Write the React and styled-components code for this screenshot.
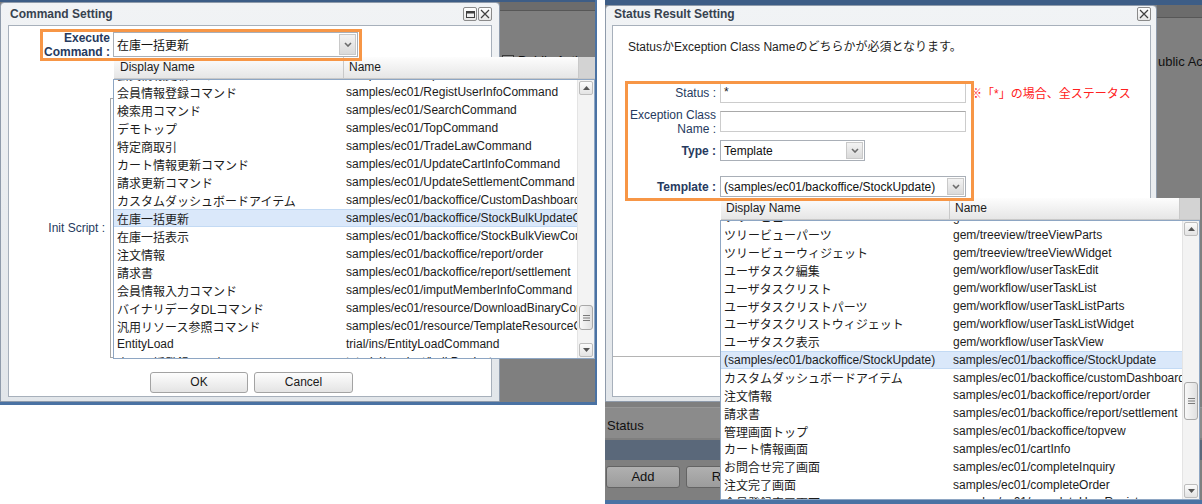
import React from "react";
import styled, { createGlobalStyle } from "styled-components";

const GlobalStyle = createGlobalStyle`
  html, body {
    margin: 0;
    padding: 0;
    background: #ffffff;
  }
  body {
    font-family: "Liberation Sans", Arial, "Noto Sans CJK JP", sans-serif;
    font-size: 12px;
    color: #1c1c1c;
  }
`;

const Page = styled("div")`
  display: flex;
  align-items: flex-start;
  gap: 8px;
  width: 1202px;
  height: 504px;
  overflow: hidden;
`;

const Shot = styled("div")`
  position: relative;
  display: flex;
  flex-direction: column;
  flex-shrink: 0;
  box-sizing: border-box;
  width: 597px;
  height: ${(p) => p.$height}px;
  background: #7f7f7f;
  border-right: ${(p) => p.$edgeRight}px solid #4a72a3;
  border-bottom: ${(p) => p.$edgeBottom}px solid #4a72a3;
`;

const TopStrip = styled("div")`
  flex-shrink: 0;
  height: ${(p) => p.$h}px;
  background: #3d5d86;
`;

const MainRow = styled("div")`
  display: flex;
  flex-shrink: 0;
  height: ${(p) => p.$h}px;
`;

const Dialog = styled("div")`
  position: relative;
  z-index: 1;
  display: flex;
  flex-direction: column;
  flex-shrink: 0;
  box-sizing: border-box;
  width: ${(p) => p.$w}px;
  height: 100%;
  padding: 0 ${(p) => p.$padR}px 4px ${(p) => p.$padL}px;
  background: linear-gradient(#f1f3f5, #e2e6ea);
  border: 1px solid #8f9bab;
  border-radius: 4px 4px 0 0;
`;

const TitleBar = styled("div")`
  display: flex;
  align-items: center;
  flex-shrink: 0;
  box-sizing: border-box;
  height: ${(p) => p.$h}px;
  padding-bottom: ${(p) => p.$lift || 0}px;
  font-weight: bold;
  font-size: 12px;
  color: #37424f;
`;

const TitleText = styled("span")`
  flex: 1;
  padding-left: 2px;
`;

const TitleButtons = styled("div")`
  display: flex;
  gap: 1px;
`;

const TitleButton = styled("div")`
  display: grid;
  place-items: center;
  box-sizing: border-box;
  width: 14px;
  height: 14px;
  border: 1px solid #8a8a8a;
  border-radius: 2px;
  background: linear-gradient(#ffffff, #e6e6e6);
`;

const DialogBody = styled("div")`
  display: flex;
  flex-direction: column;
  flex: 1;
  min-height: 0;
  background: #ffffff;
  border: 1px solid #a7b0bb;
`;

const FieldRow = styled("div")`
  display: flex;
  align-items: center;
  flex-shrink: 0;
  margin-top: ${(p) => p.$top}px;
  height: ${(p) => p.$h}px;
`;

const FieldLabel = styled("div")`
  flex-shrink: 0;
  box-sizing: border-box;
  width: ${(p) => p.$w}px;
  padding-right: ${(p) => p.$pad}px;
  text-align: right;
  line-height: ${(p) => p.$lh || 14}px;
  font-weight: ${(p) => (p.$bold ? "bold" : "normal")};
  color: #263a5e;
`;

const SelectWrap = styled("div")`
  position: relative;
  flex-shrink: 0;
`;

const SelectBox = styled("div")`
  display: flex;
  box-sizing: border-box;
  width: ${(p) => p.$w}px;
  height: ${(p) => p.$h}px;
  border: 1px solid #a9afb7;
  background: #ffffff;
`;

const SelectValue = styled("div")`
  flex: 1;
  display: flex;
  align-items: center;
  padding-left: 3px;
  white-space: nowrap;
  overflow: hidden;
  color: #111111;
`;

const SelectArrow = styled("div")`
  display: grid;
  place-items: center;
  box-sizing: border-box;
  width: 17px;
  margin: 1px;
  border: 1px solid #c9c9c9;
  background: linear-gradient(#f3f3f3, #dadada);
`;

const InputBox = styled("div")`
  box-sizing: border-box;
  width: ${(p) => p.$w}px;
  height: 21px;
  padding-left: 3px;
  line-height: 19px;
  border: 1px solid #cccccc;
  border-top-color: #a9a9a9;
  background: #ffffff;
`;

const Note = styled("div")`
  margin-left: 4px;
  white-space: nowrap;
  color: #ff2020;
`;

const ScriptBox = styled("div")`
  align-self: stretch;
  width: 372px;
  border: 1px solid #a6a6a6;
  background: #ffffff;
`;

const ButtonBar = styled("div")`
  display: flex;
  justify-content: center;
  gap: 6px;
  margin-top: 14px;
  padding-left: 3px;
`;

const PushButton = styled("div")`
  box-sizing: border-box;
  width: ${(p) => p.$w}px;
  height: 21px;
  line-height: 19px;
  text-align: center;
  border: 1px solid #a3a3a3;
  border-radius: 3px;
  background: linear-gradient(#fdfdfd, #e4e4e4);
  color: #1a1a1a;
`;

const Message = styled("div")`
  flex-shrink: 0;
  height: 14px;
  margin-top: 14px;
  padding-left: 15px;
  line-height: 14px;
  white-space: nowrap;
  color: #1e1e1e;
`;

const Footer = styled("div")`
  margin-top: auto;
  height: 39px;
  border-top: 1px solid #b4b4b4;
  background: #ffffff;
`;

/* popup list */
const DropPanel = styled("div")`
  position: absolute;
  z-index: 3;
  left: 0;
  top: calc(100% + ${(p) => p.$gap}px);
  display: flex;
  flex-direction: column;
  width: ${(p) => p.$w}px;
  height: ${(p) => p.$h}px;
`;

const DropHeader = styled("div")`
  display: flex;
  flex-shrink: 0;
  box-sizing: border-box;
  height: 22px;
  margin-left: 1px;
  background: linear-gradient(#fdfdfd, #e6e6e6);
  border-bottom: 1px solid #c8c8c8;
`;

const HeadCell = styled("div")`
  box-sizing: border-box;
  flex: ${(p) => (p.$w ? "none" : 1)};
  width: ${(p) => (p.$w ? `${p.$w}px` : "auto")};
  padding-left: ${(p) => p.$pad}px;
  line-height: 21px;
  border-right: 1px solid #c9c9c9;
  color: #1c1c1c;
`;

const HeadCorner = styled("div")`
  width: ${(p) => p.$w}px;
  background: #d3d3d3;
`;

const DropBody = styled("div")`
  display: flex;
  flex: 1;
  min-height: 0;
  background: #ffffff;
  border: 1px solid #8ea6c3;
`;

const RowsViewport = styled("div")`
  flex: 1;
  overflow: hidden;
`;

const RowsTrack = styled("div")`
  margin-top: ${(p) => p.$offset}px;
`;

const ListRow = styled("div")`
  display: flex;
  align-items: center;
  box-sizing: border-box;
  height: ${(p) => p.$h}px;
  white-space: nowrap;
  background: ${(p) => (p.$sel ? "#dae8fa" : "transparent")};
  border-top: 1px solid ${(p) => (p.$sel ? "#c3daf4" : "transparent")};
  border-bottom: 1px solid ${(p) => (p.$sel ? "#c3daf4" : "transparent")};
`;

const RowCell = styled("div")`
  box-sizing: border-box;
  flex: ${(p) => (p.$w ? "none" : 1)};
  width: ${(p) => (p.$w ? `${p.$w}px` : "auto")};
  padding-left: ${(p) => p.$pad}px;
  overflow: hidden;
  color: #1c1c1c;
`;

const ScrollTrack = styled("div")`
  position: relative;
  display: flex;
  flex-direction: column;
  justify-content: space-between;
  flex-shrink: 0;
  box-sizing: border-box;
  width: 17px;
  padding: 1px;
  background: #f3f3f3;
  border-left: 1px solid #e4e4e4;
`;

const ScrollArrow = styled("div")`
  display: grid;
  place-items: center;
  box-sizing: border-box;
  height: 14px;
  border: 1px solid #bdbdbd;
  border-radius: 2px;
  background: linear-gradient(#fbfbfb, #e3e3e3);
`;

const ScrollThumb = styled("div")`
  position: absolute;
  left: 1px;
  right: 1px;
  top: ${(p) => p.$top}px;
  height: ${(p) => p.$h}px;
  display: grid;
  place-items: center;
  box-sizing: border-box;
  border: 1px solid #a8a8a8;
  border-radius: 3px;
  background: linear-gradient(90deg, #f8f8f8, #e0e0e0);
`;

/* backdrop pieces */
const SidePane = styled("div")`
  display: flex;
  flex-direction: column;
  flex: 1;
  min-width: 0;
  overflow: hidden;
  background: #7f7f7f;
`;

const SideBand = styled("div")`
  flex-shrink: 0;
  height: ${(p) => p.$h}px;
  background: #6c6c6c;
  border-bottom: 1px solid #575757;
`;

const SideText = styled("div")`
  display: flex;
  align-items: center;
  gap: 4px;
  margin-top: ${(p) => p.$top}px;
  padding-left: ${(p) => p.$pad}px;
  white-space: nowrap;
  font-size: 13px;
  color: #111111;
`;

const CheckMark = styled("span")`
  box-sizing: border-box;
  width: 12px;
  height: 12px;
  border: 1px solid #3a3a3a;
  background: #9a9a9a;
`;

const BackArea = styled("div")`
  display: flex;
  flex-direction: column;
  flex: 1;
  background: #7f7f7f;
`;

const StatusBand = styled("div")`
  display: flex;
  align-items: center;
  height: 31px;
  margin-top: 5px;
  padding: 4px 0 0 2px;
  box-sizing: border-box;
  background: #8b8b8b;
  border-top: 1px solid #979797;
  font-size: 13px;
  color: #111111;
`;

const NavBand = styled("div")`
  height: 20px;
  margin-top: 2px;
  background: #5a687a;
`;

const BackButtons = styled("div")`
  display: flex;
  gap: 6px;
  padding: 6px 0 0 1px;
`;

const BackButton = styled("div")`
  box-sizing: border-box;
  width: ${(p) => p.$w}px;
  height: 22px;
  line-height: 20px;
  text-align: center;
  border: 1px solid #646464;
  border-radius: 3px;
  background: linear-gradient(#b0b0b0, #9c9c9c);
  font-size: 13px;
  color: #111111;
`;

const Highlight = styled("div")`
  position: absolute;
  z-index: 10;
  box-sizing: border-box;
  left: ${(p) => p.$x}px;
  top: ${(p) => p.$y}px;
  width: ${(p) => p.$w}px;
  height: ${(p) => p.$h}px;
  border: 3px solid #f79646;
  pointer-events: none;
`;

const Chevron = () => (
  <svg width="8" height="5" viewBox="0 0 8 5">
    <path d="M1 1 L4 4 L7 1" fill="none" stroke="#6b6b6b" strokeWidth="1.6" />
  </svg>
);

const Tri = ({ up }) => (
  <svg width="7" height="4" viewBox="0 0 7 4">
    <path d={up ? "M0 4 L3.5 0 L7 4 Z" : "M0 0 L3.5 4 L7 0 Z"} fill="#555555" />
  </svg>
);

const Grip = () => (
  <svg width="7" height="6" viewBox="0 0 7 6">
    <path d="M0 0.5H7M0 3H7M0 5.5H7" stroke="#7a7a7a" strokeWidth="1" />
  </svg>
);

const MaxIcon = () => (
  <svg width="9" height="7" viewBox="0 0 9 7">
    <rect x="0.5" y="0.5" width="8" height="6" fill="none" stroke="#3f3f3f" />
    <line x1="0" y1="1.5" x2="9" y2="1.5" stroke="#3f3f3f" strokeWidth="2" />
  </svg>
);

const CloseIcon = () => (
  <svg width="10" height="10" viewBox="0 0 10 10">
    <path d="M1 1L9 9M9 1L1 9" stroke="#3f3f3f" strokeWidth="1.2" />
  </svg>
);

const commandRows = [
  ["会員情報更新コマンド", "samples/ec01/UpdateUserInfoCommand"],
  ["会員情報登録コマンド", "samples/ec01/RegistUserInfoCommand"],
  ["検索用コマンド", "samples/ec01/SearchCommand"],
  ["デモトップ", "samples/ec01/TopCommand"],
  ["特定商取引", "samples/ec01/TradeLawCommand"],
  ["カート情報更新コマンド", "samples/ec01/UpdateCartInfoCommand"],
  ["請求更新コマンド", "samples/ec01/UpdateSettlementCommand"],
  ["カスタムダッシュボードアイテム", "samples/ec01/backoffice/CustomDashboardCommand"],
  ["在庫一括更新", "samples/ec01/backoffice/StockBulkUpdateCommand"],
  ["在庫一括表示", "samples/ec01/backoffice/StockBulkViewCommand"],
  ["注文情報", "samples/ec01/backoffice/report/order"],
  ["請求書", "samples/ec01/backoffice/report/settlement"],
  ["会員情報入力コマンド", "samples/ec01/imputMemberInfoCommand"],
  ["バイナリデータDLコマンド", "samples/ec01/resource/DownloadBinaryCommand"],
  ["汎用リソース参照コマンド", "samples/ec01/resource/TemplateResourceCommand"],
  ["EntityLoad", "trial/ins/EntityLoadCommand"],
  ["商品一括登録画面表示コマンド", "tutorial/product/bulkProduct"],
];

const templateRows = [
  ["ツリービュー", "gem/treeview/treeView"],
  ["ツリービューパーツ", "gem/treeview/treeViewParts"],
  ["ツリービューウィジェット", "gem/treeview/treeViewWidget"],
  ["ユーザタスク編集", "gem/workflow/userTaskEdit"],
  ["ユーザタスクリスト", "gem/workflow/userTaskList"],
  ["ユーザタスクリストパーツ", "gem/workflow/userTaskListParts"],
  ["ユーザタスクリストウィジェット", "gem/workflow/userTaskListWidget"],
  ["ユーザタスク表示", "gem/workflow/userTaskView"],
  ["(samples/ec01/backoffice/StockUpdate)", "samples/ec01/backoffice/StockUpdate"],
  ["カスタムダッシュボードアイテム", "samples/ec01/backoffice/customDashboard"],
  ["注文情報", "samples/ec01/backoffice/report/order"],
  ["請求書", "samples/ec01/backoffice/report/settlement"],
  ["管理画面トップ", "samples/ec01/backoffice/topvew"],
  ["カート情報画面", "samples/ec01/cartInfo"],
  ["お問合せ完了画面", "samples/ec01/completeInquiry"],
  ["注文完了画面", "samples/ec01/completeOrder"],
  ["会員登録完了画面", "samples/ec01/completeUserRegist"],
];

function DropList(props) {
  return (
    <DropPanel $gap={props.gap} $w={props.w} $h={props.h}>
      <DropHeader>
        <HeadCell $w={props.headW} $pad={props.headPad}>Display Name</HeadCell>
        <HeadCell $pad={5}>Name</HeadCell>
        <HeadCorner $w={props.corner} />
      </DropHeader>
      <DropBody>
        <RowsViewport>
          <RowsTrack $offset={props.offset}>
            {props.rows.map(([label, name], i) => (
              <ListRow key={i} $h={props.rowH} $sel={i === props.selected}>
                <RowCell $w={props.colW} $pad={3}>{label}</RowCell>
                <RowCell $pad={3}>{name}</RowCell>
              </ListRow>
            ))}
          </RowsTrack>
        </RowsViewport>
        <ScrollTrack>
          <ScrollArrow><Tri up /></ScrollArrow>
          <ScrollThumb $top={props.thumbTop} $h={props.thumbH}><Grip /></ScrollThumb>
          <ScrollArrow><Tri /></ScrollArrow>
        </ScrollTrack>
      </DropBody>
    </DropPanel>
  );
}

function CommandSetting() {
  return (
    <Shot $height={405} $edgeRight={2} $edgeBottom={3}>
      <TopStrip $h={2} />
      <MainRow $h={400}>
        <Dialog $w={500} $padL={7} $padR={7}>
          <TitleBar $h={22}>
            <TitleText>Command Setting</TitleText>
            <TitleButtons>
              <TitleButton><MaxIcon /></TitleButton>
              <TitleButton><CloseIcon /></TitleButton>
            </TitleButtons>
          </TitleBar>
          <DialogBody>
            <FieldRow $top={6} $h={25}>
              <FieldLabel $w={104} $pad={3} $lh={14} $bold>
                Execute
                <br />
                Command :
              </FieldLabel>
              <SelectWrap>
                <SelectBox $w={245} $h={25}>
                  <SelectValue>在庫一括更新</SelectValue>
                  <SelectArrow><Chevron /></SelectArrow>
                </SelectBox>
                <DropList
                  rows={commandRows}
                  selected={8}
                  gap={0}
                  w={482}
                  h={302}
                  headW={230}
                  headPad={6}
                  colW={229}
                  corner={16}
                  rowH={18}
                  offset={-15}
                  thumbTop={225}
                  thumbH={25}
                />
              </SelectWrap>
            </FieldRow>
            <FieldRow $top={41} $h={260}>
              <FieldLabel $w={101} $pad={5}>Init Script :</FieldLabel>
              <ScriptBox />
            </FieldRow>
            <ButtonBar>
              <PushButton $w={98}>OK</PushButton>
              <PushButton $w={99}>Cancel</PushButton>
            </ButtonBar>
          </DialogBody>
        </Dialog>
        <SidePane>
          <SideBand $h={8} />
          <SideText $top={42} $pad={2}>
            <CheckMark />
            Public Action
          </SideText>
        </SidePane>
      </MainRow>
      <Highlight $x={40} $y={29} $w={322} $h={32} />
    </Shot>
  );
}

function StatusResultSetting() {
  return (
    <Shot $height={504} $edgeRight={0} $edgeBottom={4}>
      <TopStrip $h={5} />
      <MainRow $h={397}>
        <Dialog $w={552} $padL={6} $padR={5}>
          <TitleBar $h={19} $lift={3}>
            <TitleText>Status Result Setting</TitleText>
            <TitleButtons>
              <TitleButton><CloseIcon /></TitleButton>
            </TitleButtons>
          </TitleBar>
          <DialogBody>
            <Message>StatusかException Class Nameのどちらかが必須となります。</Message>
            <FieldRow $top={28} $h={21}>
              <FieldLabel $w={107} $pad={4}>Status :</FieldLabel>
              <InputBox $w={246}>*</InputBox>
              <Note>※「*」の場合、全ステータス</Note>
            </FieldRow>
            <FieldRow $top={8} $h={21}>
              <FieldLabel $w={107} $pad={4}>
                Exception Class
                <br />
                Name :
              </FieldLabel>
              <InputBox $w={246} />
            </FieldRow>
            <FieldRow $top={8} $h={21}>
              <FieldLabel $w={107} $pad={4} $bold>Type :</FieldLabel>
              <SelectWrap>
                <SelectBox $w={145} $h={21}>
                  <SelectValue>Template</SelectValue>
                  <SelectArrow><Chevron /></SelectArrow>
                </SelectBox>
              </SelectWrap>
            </FieldRow>
            <FieldRow $top={15} $h={21}>
              <FieldLabel $w={107} $pad={4} $bold>Template :</FieldLabel>
              <SelectWrap>
                <SelectBox $w={246} $h={21}>
                  <SelectValue>(samples/ec01/backoffice/StockUpdate)</SelectValue>
                  <SelectArrow><Chevron /></SelectArrow>
                </SelectBox>
                <DropList
                  rows={templateRows}
                  selected={8}
                  gap={1}
                  w={480}
                  h={302}
                  headW={229}
                  headPad={5}
                  colW={229}
                  corner={20}
                  rowH={17.85}
                  offset={-13}
                  thumbTop={161}
                  thumbH={38}
                />
              </SelectWrap>
            </FieldRow>
            <Footer />
          </DialogBody>
        </Dialog>
        <SidePane>
          <SideBand $h={12} />
          <SideText $top={36} $pad={1}>ublic Action</SideText>
        </SidePane>
      </MainRow>
      <BackArea>
        <StatusBand>Status</StatusBand>
        <NavBand />
        <BackButtons>
          <BackButton $w={74}>Add</BackButton>
          <BackButton $w={100}>Remove</BackButton>
        </BackButtons>
      </BackArea>
      <Highlight $x={20} $y={81} $w={349} $h={120} />
    </Shot>
  );
}

export default function App() {
  return (
    <>
      <GlobalStyle />
      <Page>
        <CommandSetting />
        <StatusResultSetting />
      </Page>
    </>
  );
}
